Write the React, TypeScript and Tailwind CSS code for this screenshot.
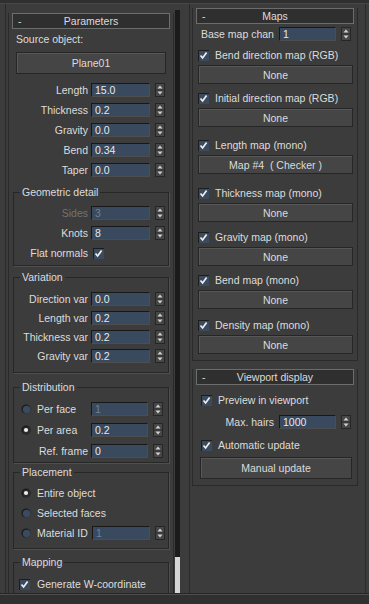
import React from 'react';

const Spinner: React.FC = () => (
  <svg width="10" height="14" viewBox="0 0 10 14" className="shrink-0 ml-[5px]">
    <rect x="0.5" y="0.5" width="9" height="13" fill="#474747" stroke="#262626" />
    <path d="M2.5 5.5 L5 2.5 L7.5 5.5 Z" fill="#d2d2d2" />
    <line x1="1" y1="7" x2="9" y2="7" stroke="#2e2e2e" />
    <path d="M2.5 8.5 L5 11.5 L7.5 8.5 Z" fill="#d2d2d2" />
  </svg>
);

const Check: React.FC = () => (
  <svg width="11" height="11" viewBox="0 0 11 11" className="shrink-0">
    <rect x="0" y="0" width="11" height="11" fill="#1d1d1d" />
    <rect x="1" y="1" width="10" height="10" fill="#3a4b5f" />
    <path d="M2.5 5.5 L4.6 8 L8.6 2.6" fill="none" stroke="#f0f0f0" strokeWidth="1.7" />
  </svg>
);

const Radio: React.FC<{ on?: boolean }> = ({ on }) => (
  <svg width="10" height="10" viewBox="0 0 10 10" className="shrink-0">
    <circle cx="5" cy="5" r="4.6" fill="#1c1c1c" />
    <circle cx="5.6" cy="5.6" r="3.8" fill={on ? '#2c2c2c' : '#3a4b5f'} />
    {on && <circle cx="5" cy="5" r="2.1" fill="#ededed" />}
  </svg>
);

const Field: React.FC<{ value: string; w: string; disabled?: boolean }> = ({ value, w, disabled }) => (
  <div
    className={`h-[14px] ${w} shrink-0 flex items-center pl-[3px] bg-[#394a5e] border border-[#181818] border-b-[#4e4e4e] border-r-[#4e4e4e] ${
      disabled ? 'text-[#6d8197]' : 'text-[#e8e8e8]'
    }`}
  >
    {value}
  </div>
);

const SpinRow: React.FC<{ label: string; value: string; labelW: string; h: string; disabled?: boolean }> = ({
  label,
  value,
  labelW,
  h,
  disabled,
}) => (
  <div className={`flex items-center ${h}`}>
    <span className={`${labelW} shrink-0 text-right pr-[3px] whitespace-nowrap ${disabled ? 'text-[#737373]' : ''}`}>
      {label}
    </span>
    <Field value={value} w="w-[59px]" disabled={disabled} />
    <Spinner />
  </div>
);

const Button: React.FC<{ label: string; className: string }> = ({ label, className }) => (
  <div
    className={`flex items-center justify-center bg-[#454545] border border-[#262626] shadow-[inset_1px_1px_0_#575757] whitespace-pre ${className}`}
  >
    {label}
  </div>
);

const Rollout: React.FC<{ title: string; className: string; children: React.ReactNode }> = ({ title, className, children }) => (
  <div className={`w-[166px] border-x border-b border-[#2a2a2a] ${className}`}>
    <div className="-mt-[8px] ml-[3px] mr-[3px] h-[16px] flex items-center bg-[#2f2f2f] border border-[#6c6c6c]">
      <span className="w-[18px] pl-[5px]">-</span>
      <span className="flex-1 text-center pr-[18px]">{title}</span>
    </div>
    {children}
  </div>
);

const Group: React.FC<{ title: string; className: string; children: React.ReactNode }> = ({ title, className, children }) => (
  <fieldset className={`mx-[4px] border border-[#272727] shadow-[1px_1px_0_#4f4f4f] ${className}`}>
    <legend className="ml-[6px] px-[2px] leading-[14px]">{title}</legend>
    {children}
  </fieldset>
);

const MapSlot: React.FC<{ label: string; slot: string; gap: string }> = ({ label, slot, gap }) => (
  <div className={gap}>
    <div className="h-[14px] flex items-center pl-[5px]">
      <Check />
      <span className="ml-[6px] whitespace-nowrap">{label}</span>
    </div>
    <Button label={slot} className="mt-[3px] ml-[5px] w-[155px] h-[19px]" />
  </div>
);

export default function App() {
  return (
    <div className="w-[369px] h-[604px] overflow-hidden flex flex-col bg-[#3c3c3c] text-[#dcdcdc] text-[10.5px] leading-[14px] font-['Liberation_Sans',Arial,sans-serif]">
      <div className="h-[4px] shrink-0 bg-[#2f2f2f] border-b border-[#474747]" />

      <div className="flex h-[590px] shrink-0 border-b border-[#262626]">
        {/* left column: Parameters */}
        <div className="ml-[5px] w-[176px] flex border-l border-[#2a2a2a] overflow-hidden">
          <div className="w-[168px] shrink-0 pl-[2px]">
            <Rollout title="Parameters" className="mt-[17px]">
              <div className="pl-[7px] mt-[3px]">Source object:</div>
              <Button label="Plane01" className="mt-[6px] ml-[7px] w-[150px] h-[22px]" />
              <div className="mt-[6px]">
                <SpinRow label="Length" value="15.0" labelW="w-[82px]" h="h-[20px]" />
                <SpinRow label="Thickness" value="0.2" labelW="w-[82px]" h="h-[20px]" />
                <SpinRow label="Gravity" value="0.0" labelW="w-[82px]" h="h-[20px]" />
                <SpinRow label="Bend" value="0.34" labelW="w-[82px]" h="h-[20px]" />
                <SpinRow label="Taper" value="0.0" labelW="w-[82px]" h="h-[20px]" />
              </div>

              <Group title="Geometric detail" className="mt-[5px] pb-[2px]">
                <div className="mt-[4px]">
                  <SpinRow label="Sides" value="3" labelW="w-[77px]" h="h-[20px]" disabled />
                  <SpinRow label="Knots" value="8" labelW="w-[77px]" h="h-[20px]" />
                  <div className="flex items-center h-[20px]">
                    <span className="w-[77px] text-right pr-[3px]">Flat normals</span>
                    <span className="ml-[2px]">
                      <Check />
                    </span>
                  </div>
                </div>
              </Group>

              <Group title="Variation" className="mt-[4px] pb-[7px]">
                <div className="mt-[5px]">
                  <SpinRow label="Direction var" value="0.0" labelW="w-[77px]" h="h-[19px]" />
                  <SpinRow label="Length var" value="0.2" labelW="w-[77px]" h="h-[19px]" />
                  <SpinRow label="Thickness var" value="0.2" labelW="w-[77px]" h="h-[19px]" />
                  <SpinRow label="Gravity var" value="0.2" labelW="w-[77px]" h="h-[19px]" />
                </div>
              </Group>

              <Group title="Distribution" className="mt-[7px] pb-[1px]">
                <div className="mt-[4px]">
                  <div className="flex items-center h-[21px]">
                    <div className="w-[77px] shrink-0 flex items-center pl-[7px]">
                      <Radio />
                      <span className="ml-[6px]">Per face</span>
                    </div>
                    <Field value="1" w="w-[57px]" disabled />
                    <Spinner />
                  </div>
                  <div className="flex items-center h-[21px]">
                    <div className="w-[77px] shrink-0 flex items-center pl-[7px]">
                      <Radio on />
                      <span className="ml-[6px]">Per area</span>
                    </div>
                    <Field value="0.2" w="w-[57px]" />
                    <Spinner />
                  </div>
                  <div className="flex items-center h-[21px]">
                    <span className="w-[77px] shrink-0 text-right pr-[3px]">Ref. frame</span>
                    <Field value="0" w="w-[57px]" />
                    <Spinner />
                  </div>
                </div>
              </Group>

              <Group title="Placement" className="mt-[2px] pb-[5px]">
                <div className="mt-[4px]">
                  <div className="flex items-center h-[20px] pl-[7px]">
                    <Radio on />
                    <span className="ml-[6px]">Entire object</span>
                  </div>
                  <div className="flex items-center h-[20px] pl-[7px]">
                    <Radio />
                    <span className="ml-[6px]">Selected faces</span>
                  </div>
                  <div className="flex items-center h-[20px]">
                    <div className="w-[78px] shrink-0 flex items-center pl-[7px]">
                      <Radio />
                      <span className="ml-[6px] whitespace-nowrap">Material ID</span>
                    </div>
                    <Field value="1" w="w-[58px]" disabled />
                    <Spinner />
                  </div>
                </div>
              </Group>

              <Group title="Mapping" className="mt-[6px] pb-[20px]">
                <div className="mt-[5px] flex items-center h-[20px] pl-[5px]">
                  <Check />
                  <span className="ml-[7px] whitespace-nowrap">Generate W-coordinate</span>
                </div>
              </Group>
            </Rollout>
          </div>
          <div className="ml-[1px] w-[5px] mt-[6px] flex flex-col shrink-0">
            <div className="flex-1 bg-[#1b1b1b]" />
            <div className="h-[36px] bg-[#d6d6d6]" />
          </div>
        </div>

        {/* right column: Maps + Viewport display */}
        <div className="ml-[8px] w-[177px] border-x border-[#2a2a2a] pl-[2px]">
          <Rollout title="Maps" className="mt-[12px] pb-[6px]">
            <div className="mt-[3px] flex items-center h-[14px] pl-[8px]">
              <span className="w-[78px] shrink-0 whitespace-nowrap">Base map chan</span>
              <Field value="1" w="w-[57px]" />
              <Spinner />
            </div>
            <MapSlot label="Bend direction map (RGB)" slot="None" gap="mt-[7px]" />
            <MapSlot label="Initial direction map (RGB)" slot="None" gap="mt-[7px]" />
            <MapSlot label="Length map (mono)" slot="Map #4  ( Checker )" gap="mt-[11px]" />
            <MapSlot label="Thickness map (mono)" slot="None" gap="mt-[12px]" />
            <MapSlot label="Gravity map (mono)" slot="None" gap="mt-[8px]" />
            <MapSlot label="Bend map (mono)" slot="None" gap="mt-[7px]" />
            <MapSlot label="Density map (mono)" slot="None" gap="mt-[9px]" />
          </Rollout>

          <Rollout title="Viewport display" className="mt-[16px] pb-[6px]">
            <div className="mt-[8px] flex items-center h-[14px] pl-[8px]">
              <Check />
              <span className="ml-[6px]">Preview in viewport</span>
            </div>
            <div className="mt-[8px] flex items-center h-[14px]">
              <span className="w-[86px] shrink-0 text-right pr-[5px]">Max. hairs</span>
              <Field value="1000" w="w-[57px]" />
              <Spinner />
            </div>
            <div className="mt-[9px] flex items-center h-[14px] pl-[8px]">
              <Check />
              <span className="ml-[6px]">Automatic update</span>
            </div>
            <Button label="Manual update" className="mt-[5px] ml-[7px] w-[152px] h-[22px]" />
          </Rollout>
        </div>
      </div>

      <div className="flex-1 bg-[#303030] border-t border-[#4d4d4d]" />
    </div>
  );
}
